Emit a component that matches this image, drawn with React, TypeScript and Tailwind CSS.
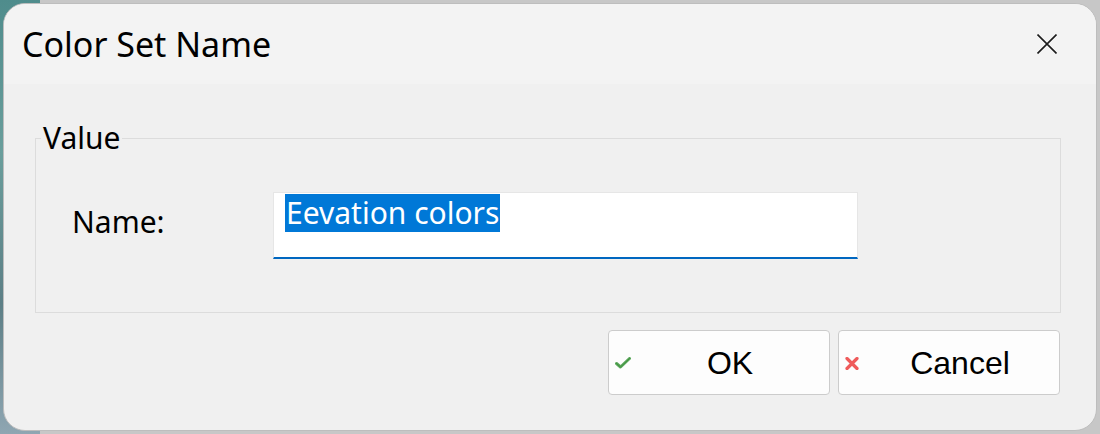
import React from 'react';

const segoe = { fontFamily: '"Noto Sans", "Open Sans", sans-serif' };
const arial = { fontFamily: '"Liberation Sans", Arial, sans-serif' };

function CheckIcon() {
  return (
    <svg width="16" height="12" viewBox="0 0 16 12">
      <path d="M1.5 6.5 L5.5 10 L14.5 1.5" fill="none" stroke="#5aa85a" strokeWidth="3" strokeLinecap="round" strokeLinejoin="round" />
      <path d="M1.5 6.5 L5.5 10 L14.5 1.5" fill="none" stroke="#3f8f3f" strokeWidth="1" strokeLinecap="round" strokeLinejoin="round" />
    </svg>
  );
}

function CrossIcon() {
  return (
    <svg width="14" height="13" viewBox="0 0 14 13">
      <path d="M2 1.5 L12 11.5 M12 1.5 L2 11.5" fill="none" stroke="#ef5b5b" strokeWidth="3.2" strokeLinecap="round" />
    </svg>
  );
}

function DialogButton({ label, icon }: { label: string; icon: React.ReactNode }) {
  return (
    <button className="relative flex h-[65px] w-[222px] items-center justify-center rounded-[4px] border border-[#cccccc] bg-[#fdfdfd] pl-[22px] text-[32px] leading-none text-black" style={arial}>
      <span className="absolute left-[6px] top-[26px]">{icon}</span>
      {label}
    </button>
  );
}

export default function App() {
  return (
    <div className="relative h-[434px] w-[1100px] overflow-hidden bg-[#c7c7c7]">
      {/* desktop behind the window */}
      <div className="h-full w-[40px] bg-[linear-gradient(180deg,#4f8c8c_0%,#6a9e9c_35%,#5d7f86_70%,#8fa6b2_100%)]" />

      <div className="absolute left-[3px] top-[3px] flex h-[428px] w-[1094px] flex-col overflow-hidden rounded-[22px] border border-[#bdbdbd] bg-[#f0f0f0]">
        {/* title bar */}
        <div className="flex h-[80px] shrink-0 items-center justify-between bg-[#f3f3f3] pl-[18px] pr-[39px]">
          <span className="text-[34px] leading-none text-black" style={segoe}>Color Set Name</span>
          <svg width="20" height="20" viewBox="0 0 20 20">
            <path d="M0.5 0.5 L19.5 19.5 M19.5 0.5 L0.5 19.5" stroke="#1c1c1c" strokeWidth="1.6" fill="none" />
          </svg>
        </div>

        {/* body */}
        <div className="flex flex-1 flex-col pl-[31px] pr-[35px] pt-[35px]">
          <fieldset className="h-[194px] border border-[#dcdcdc]" style={segoe}>
            <legend className="ml-[5px] px-[2px] text-[30px] leading-[38px] text-black">Value</legend>
            <div className="mt-[35px] flex items-start pl-[36px]">
              <span className="mt-[15px] w-[201px] text-[30px] leading-none text-black">Name:</span>
              <div className="h-[67px] w-[585px] border border-[#e6e6e6] border-b-2 border-b-[#0067c0] bg-white pl-[11px] pt-[1px]">
                <span className="inline-block h-[38px] bg-[#0078d7] px-[1px] text-[30px] leading-[38px] text-white">Eevation colors</span>
              </div>
            </div>
          </fieldset>

          <div className="mt-[17px] flex justify-end gap-[8px] pr-[1px]">
            <DialogButton label="OK" icon={<CheckIcon />} />
            <DialogButton label="Cancel" icon={<CrossIcon />} />
          </div>
        </div>
      </div>
    </div>
  );
}
